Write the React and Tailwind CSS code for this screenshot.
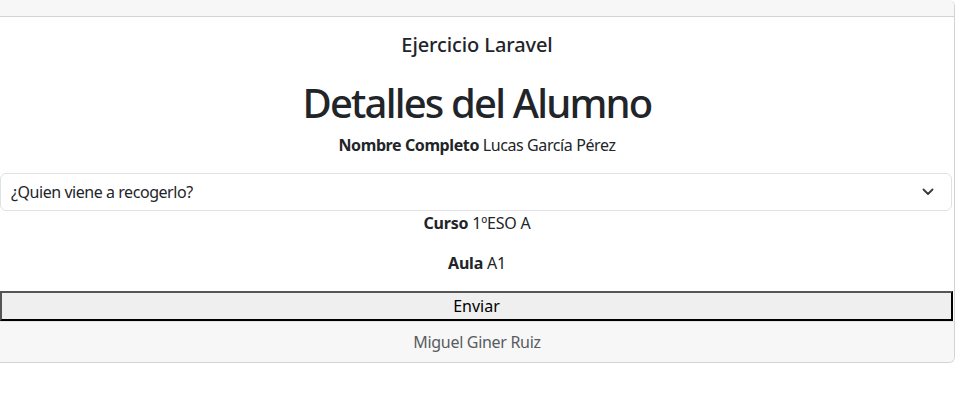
const ff = { fontFamily: '"Noto Sans", "Open Sans", sans-serif' };

export default function App() {
  return (
    <div className="w-[955px] h-[402px] bg-white text-[#212529]" style={ff}>
      <div className="w-[955px] border-r border-b border-[#d3d3d3] rounded-br-[6px] rounded-tr-[6px] overflow-hidden">
        <div className="h-[17px] bg-[#f7f7f7] border-b border-[#d3d3d3]" />
        <div className="text-center">
          <h5 className="pt-[16px] text-[20px] leading-[24px] font-medium tracking-[-0.1px]">Ejercicio Laravel</h5>
          <h1 className="mt-[22px] text-[40px] leading-[48px] font-medium tracking-[-1.8px]">Detalles del Alumno</h1>
          <p className="mt-[6px] text-[16px] leading-[24px] tracking-[-0.4px]">
            <b className="font-bold">Nombre Completo</b> Lucas García Pérez
          </p>
        </div>
        <div className="mt-[16px] mr-[2px] h-[38px] border border-[#dee2e6] rounded-[6px] flex items-center justify-between pl-[10px] pr-[15px] text-[16px]">
          <span className="tracking-[-0.45px]">¿Quien viene a recogerlo?</span>
          <svg width="12" height="8" viewBox="0 0 12 8" fill="none" stroke="#343a40" strokeWidth="1.8" strokeLinecap="round" strokeLinejoin="round" className="mr-[2px]">
            <polyline points="1.5 1.5 6 6 10.5 1.5" />
          </svg>
        </div>
        <p className="text-center text-[16px] leading-[24px] tracking-[-0.2px]">
          <b className="font-bold">Curso</b> 1ºESO A
        </p>
        <p className="mt-[16px] text-center text-[16px] leading-[24px] tracking-[-0.2px]">
          <b className="font-bold">Aula</b> A1
        </p>
        <button className="mt-[16px] mr-[1px] block w-[953px] h-[30px] bg-[#efefef] border-2 border-t-[#555] border-l-[#555] border-b-black border-r-black text-[16px] leading-[24px] text-black">
          Enviar
        </button>
        <div className="h-[41px] bg-[#f7f7f7] border-t border-[#e5e5e5] flex items-center justify-center text-[16px] text-[#595c5f] tracking-[-0.3px]">
          Miguel Giner Ruiz
        </div>
      </div>
    </div>
  );
}
